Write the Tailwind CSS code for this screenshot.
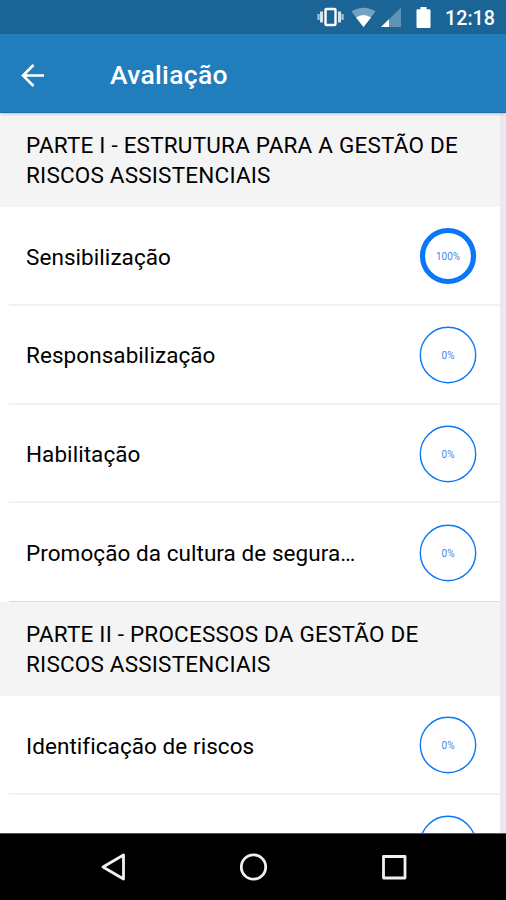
<!DOCTYPE html>
<html lang="pt-BR">
<head>
  <meta charset="UTF-8" />
  <meta name="viewport" content="width=device-width, initial-scale=1.0"/>
  <title>Avaliação</title>
  <script src="https://cdn.jsdelivr.net/npm/@tailwindcss/browser@4"></script>
</head>
<body class="bg-white font-['Roboto',sans-serif] text-black">
  <div class="w-[506px] h-[900px] flex flex-col overflow-hidden">

    <!-- Status bar -->
    <div class="h-[34px] shrink-0 bg-[#1b6496] flex items-center justify-end pr-[11px] text-white">
      <svg class="w-[27px] h-5" viewBox="0 0 27 20" fill="none">
        <path d="M1.500 7v6M25.500 7v6" stroke="#9dbfd5" stroke-width="2.400"/>
        <path d="M4.500 4.500v11M22.500 4.500v11" stroke="#d3e2ec" stroke-width="3"/>
        <rect x="8.500" y="2" width="10" height="16" rx="1" stroke="#fff" stroke-width="2.400"/>
      </svg>
      <svg class="w-[25px] h-5 ml-[7px]" viewBox="0 0 25 20">
        <path d="M0.500 4.500Q12.500 -3 24.500 4.500L12.500 20Z" fill="#75a2c0"/>
        <path d="M5 10.500Q12.500 5.500 20 10.500L12.500 20Z" fill="#fff"/>
      </svg>
      <svg class="w-5 h-5 ml-[5px]" viewBox="0 0 20 20">
        <path d="M20 0.500v19.500H0Z" fill="#5f93b5"/>
        <path d="M8 12.200v7.800H0Z" fill="#fff"/>
      </svg>
      <svg class="w-[15px] h-[21px] ml-[15px]" viewBox="0 0 15 21" fill="#fff">
        <path d="M4.500 0h6v2.200H13.500q1 0 1 1V20q0 1-1 1H1.500q-1 0-1-1V3.200q0-1 1-1H4.500Z"/>
      </svg>
      <span class="ml-[14px] pt-[3px] text-[19.700px] leading-none font-medium">12:18</span>
    </div>

    <!-- Toolbar -->
    <header class="relative z-10 h-[79px] shrink-0 bg-[#217dbb] border-b border-[#1b70aa] shadow-[0_1px_3px_rgba(0,0,0,0.22)] flex items-center pt-[4px] pl-[21px] text-white">
      <svg class="w-[23px] h-[23px]" viewBox="0 0 23 23" fill="none" stroke="#fff" stroke-width="2.600">
        <path d="M23 11.500H2M12.500 1L2 11.500L12.500 22"/>
      </svg>
      <h1 class="ml-[66px] text-[26.500px] leading-8 font-medium tracking-[0.3px]">Avaliação</h1>
    </header>

    <!-- Checklist -->
    <div class="flex-1 min-h-0 overflow-hidden flex bg-[#e9e9ef]">
      <main class="w-[500px] h-full overflow-hidden bg-white text-[22.500px]">
        <h2 class="h-[94px] bg-[#f4f4f4] pl-[26px] pt-[18px] leading-[29.500px] tracking-[0.2px]">PARTE I - ESTRUTURA PARA A GESTÃO DE<br>RISCOS ASSISTENCIAIS</h2>
        <ul id="parte1"></ul>
        <h2 class="h-[94px] bg-[#f4f4f4] pl-[26px] pt-[18px] leading-[29.500px] tracking-[0.2px]">PARTE II - PROCESSOS DA GESTÃO DE<br>RISCOS ASSISTENCIAIS</h2>
        <ul id="parte2"></ul>
      </main>
    </div>

    <!-- Navigation bar -->
    <nav class="h-[67px] shrink-0 bg-black border-t border-[#555] flex items-center">
      <svg class="w-[506px] h-[66px]" viewBox="0 0 506 66" fill="none" stroke="#f1f1f1" stroke-width="2.800" stroke-linejoin="round">
        <path d="M123.500 21V45L103 33Z"/>
        <circle cx="253.500" cy="33" r="12.200"/>
        <rect x="383.500" y="22.500" width="21.500" height="21.500"/>
      </svg>
    </nav>
  </div>

  <script>
    const parte1 = [
      { nome: 'Sensibilização', valor: 100 },
      { nome: 'Responsabilização', valor: 0 },
      { nome: 'Habilitação', valor: 0 },
      { nome: 'Promoção da cultura de segurança', valor: 0 }
    ];
    const parte2 = [
      { nome: 'Identificação de riscos', valor: 0 },
      { nome: '', valor: 0 }
    ];

    function renderList(id, items) {
      document.getElementById(id).innerHTML = items.map((item, i) => {
        const ring = item.valor === 100
          ? '<circle cx="29" cy="29" r="25.500" stroke-width="5.200"/>'
          : '<circle cx="29" cy="29" r="27.700" stroke-width="1.400"/>';
        const border = id === 'parte1' && i === items.length - 1 ? 'border-b border-[#dedede]' : 'border-b-2 border-[#f2f2f2]';
        return `
          <li class="h-[98.750px] pl-[9px]">
            <div class="h-full flex items-center justify-between pt-[2px] pl-[17px] pr-[23px] ${border}">
              <span class="w-[331px] truncate pt-[2px] tracking-[0.060px]">${item.nome}</span>
              <div class="grid place-items-center">
                <svg class="col-start-1 row-start-1 w-[58px] h-[58px]" viewBox="0 0 58 58" fill="none" stroke="#0b76f6">${ring}</svg>
                <span class="col-start-1 row-start-1 pt-[2px] text-[10px] leading-none text-[#4c83ee]">${item.valor}%</span>
              </div>
            </div>
          </li>`;
      }).join('');
    }

    renderList('parte1', parte1);
    renderList('parte2', parte2);
  </script>
</body>
</html>
